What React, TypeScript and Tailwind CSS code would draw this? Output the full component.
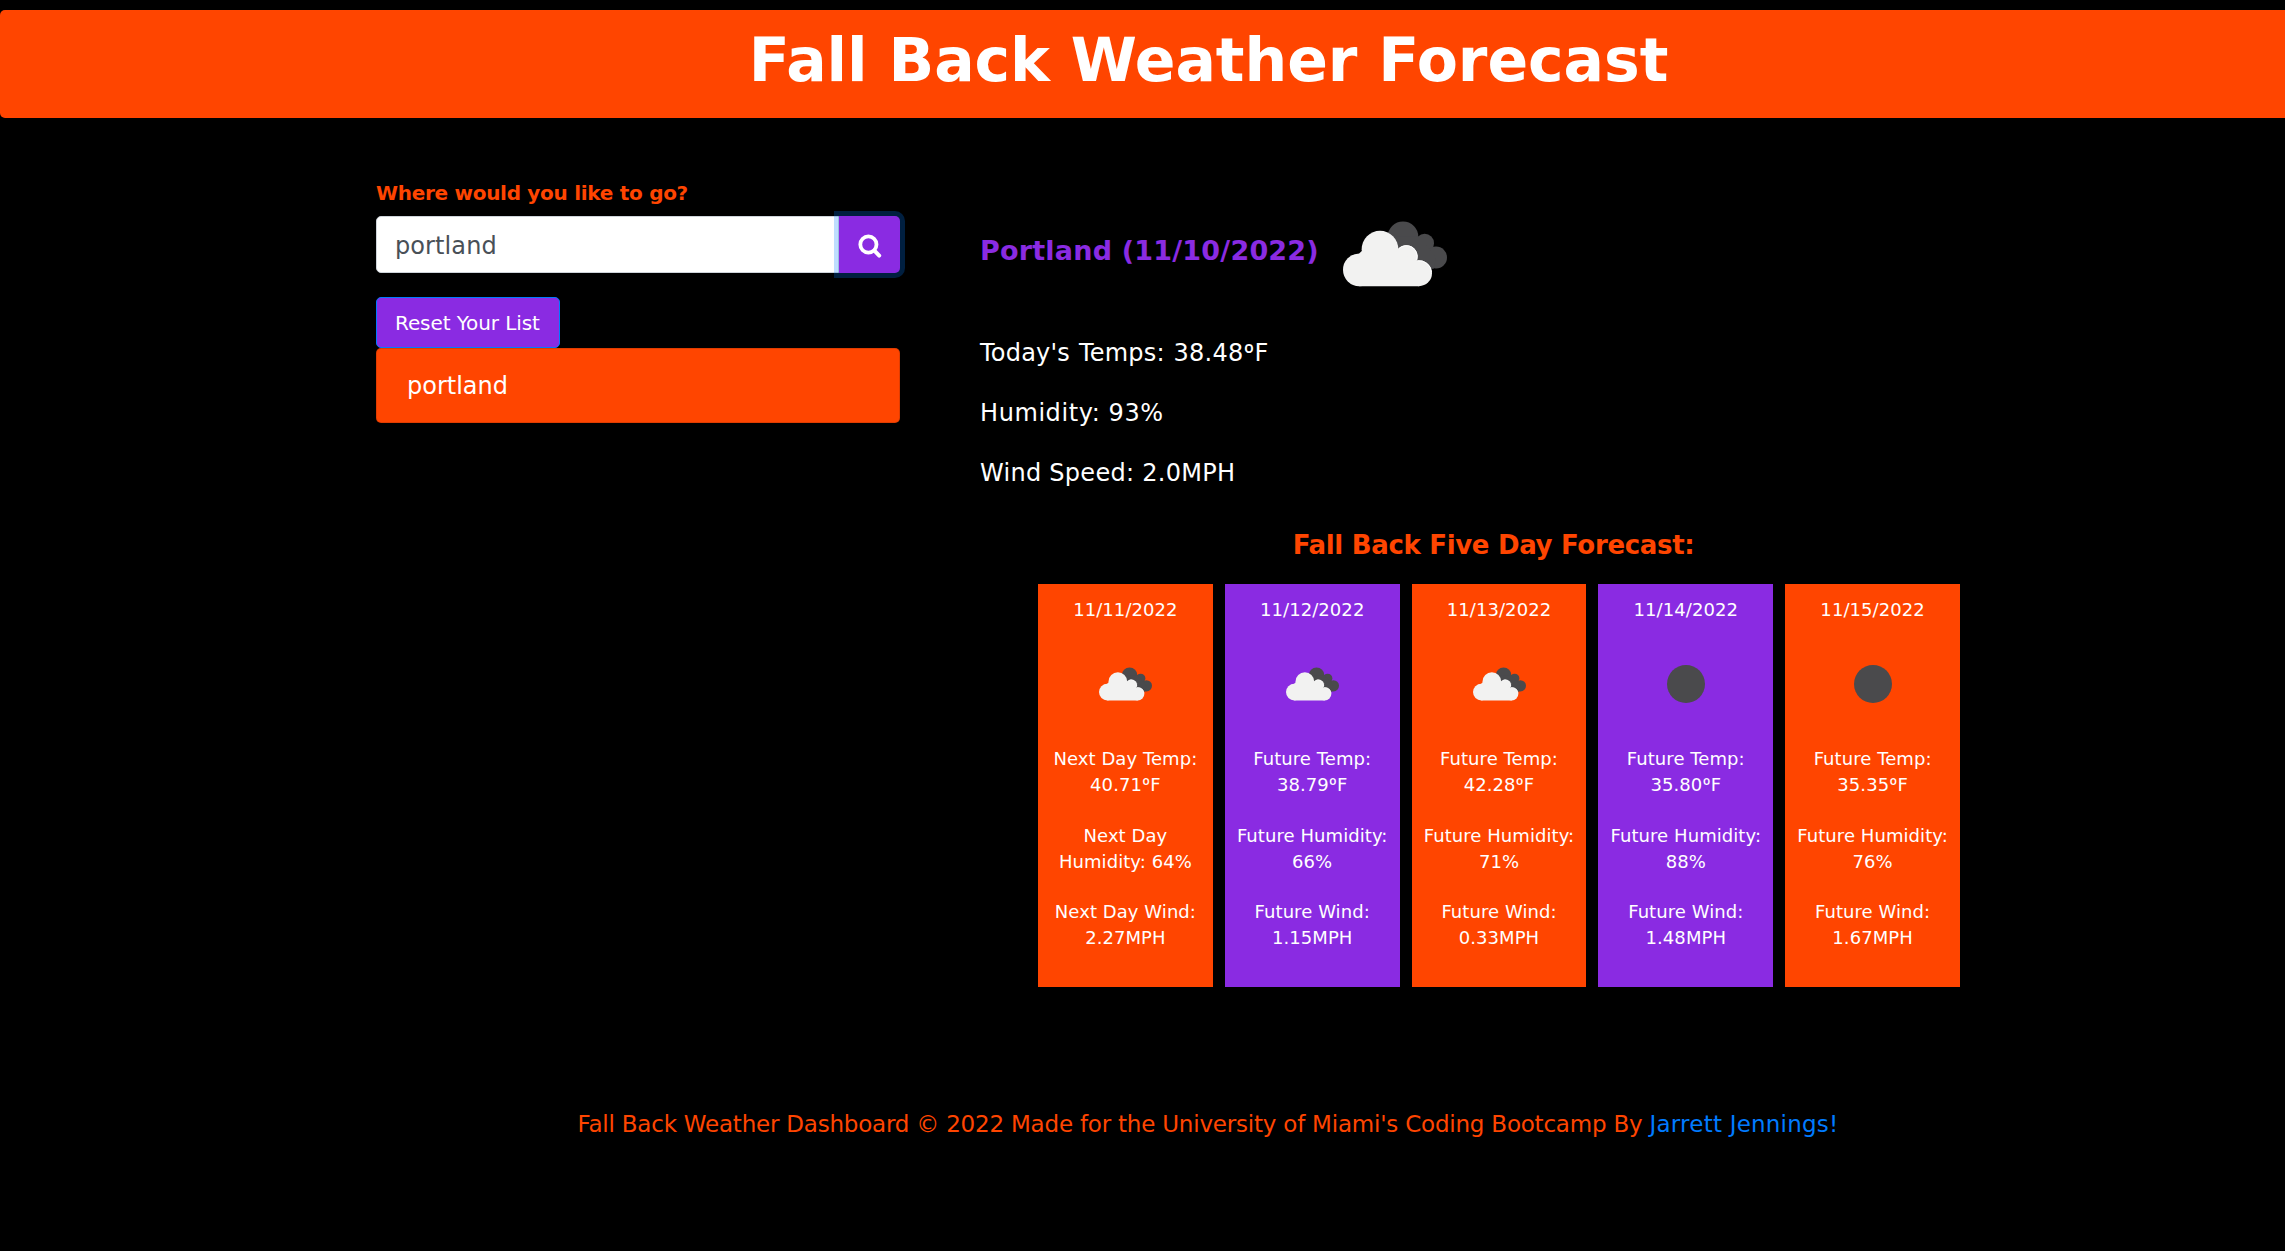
import { Fragment } from 'react';

type Sky = 'clouds' | 'clear';

type Day = {
  date: string;
  sky: Sky;
  lines: [string, string][];
};

const future = (date: string, sky: Sky, temp: string, humidity: string, wind: string): Day => ({
  date,
  sky,
  lines: [
    ['Future Temp:', temp],
    ['Future Humidity:', humidity],
    ['Future Wind:', wind],
  ],
});

const days: Day[] = [
  {
    date: '11/11/2022',
    sky: 'clouds',
    lines: [
      ['Next Day Temp:', '40.71ºF'],
      ['Next Day', 'Humidity: 64%'],
      ['Next Day Wind:', '2.27MPH'],
    ],
  },
  future('11/12/2022', 'clouds', '38.79ºF', '66%', '1.15MPH'),
  future('11/13/2022', 'clouds', '42.28ºF', '71%', '0.33MPH'),
  future('11/14/2022', 'clear', '35.80ºF', '88%', '1.48MPH'),
  future('11/15/2022', 'clear', '35.35ºF', '76%', '1.67MPH'),
];

// Sets the degree mark in a face whose ordinal has no underline.
function Reading({ text }: { text: string }) {
  return text.split('º').map((part, i) => (
    <Fragment key={i}>
      {i > 0 && <span className="font-['Roboto',sans-serif] leading-none">º</span>}
      {part}
    </Fragment>
  ));
}

function CloudIcon({ className }: { className: string }) {
  return (
    <svg viewBox="39 33 312 197" className={className} aria-hidden="true">
      <g fill="#4a4a4c">
        <circle cx="219" cy="80" r="46" />
        <circle cx="284" cy="99" r="28" />
        <circle cx="318" cy="142" r="33" />
        <path d="M190 80 L262 80 L284 99 L318 142 L312 175 L240 190 Z" />
      </g>
      <g fill="#f2f2f1">
        <circle cx="88" cy="179" r="49" />
        <circle cx="150" cy="117" r="55" />
        <circle cx="229" cy="139" r="34" />
        <circle cx="267" cy="189" r="39" />
        <path d="M88 228 L88 129 L110 110 L200 125 L258 152 L267 228 Z" />
      </g>
      <g fill="none" stroke="#ffffff" strokeWidth="3">
        <path d="M206 116 A32.5 32.5 0 0 1 260 149" />
        <path d="M262 151.8 A37.5 37.5 0 0 1 304.4 186" />
      </g>
    </svg>
  );
}

function SearchIcon() {
  return (
    <svg viewBox="0 0 24 25" className="h-[25px] w-6" fill="none" stroke="#ffffff" aria-hidden="true">
      <circle cx="10.4" cy="10.5" r="8.1" strokeWidth="3.8" />
      <path d="M16.4 16.6 L21.2 21.6" strokeWidth="4" strokeLinecap="round" />
    </svg>
  );
}

function Header() {
  return (
    <header className="mt-2.5 flex h-[108px] justify-center rounded-l-[5px] bg-[#ff4500] pt-3.5 pl-[132px]">
      <h1 className="text-[60px] leading-[72px] font-bold tracking-[-0.05px] text-white">Fall Back Weather Forecast</h1>
    </header>
  );
}

function SearchPanel() {
  return (
    <aside className="w-[524px]">
      <label htmlFor="city" className="block text-xl leading-[30px] font-bold tracking-[-0.29px] text-[#ff4500]">
        Where would you like to go?
      </label>
      <div className="mt-2 flex h-[57px]">
        <input
          id="city"
          defaultValue="portland"
          className="w-[463px] rounded-l-[5px] border border-[#ced4da] bg-white pt-0.5 pl-[18px] text-2xl tracking-[0.1px] text-[#495057] outline-none"
        />
        <button
          aria-label="Search"
          className="flex w-[61px] items-center justify-center rounded-r-[5px] bg-[#8a2be2] pt-1 shadow-[0_0_0_5px_rgba(0,123,255,0.25)]"
        >
          <SearchIcon />
        </button>
      </div>
      <button className="mt-6 flex h-[51px] w-[184px] items-center rounded-[5px] border border-[#007bff] bg-[#8a2be2] pl-[18px] text-xl tracking-[-0.1px] whitespace-nowrap text-white">
        Reset Your List
      </button>
      <ul>
        <li className="flex h-[75px] items-center rounded-[5px] border border-black/12 bg-[#ff4500] pl-[30px] text-2xl text-white">
          portland
        </li>
      </ul>
    </aside>
  );
}

function CurrentWeather() {
  return (
    <div className="text-white">
      <div className="flex h-[125px] items-center">
        <h2 className="w-[363px] text-[27px] leading-10 font-bold tracking-[0.2px] whitespace-nowrap text-[#8a2be2]">
          Portland (11/10/2022)
        </h2>
        <CloudIcon className="mt-1.5 h-[66px] w-[104px]" />
      </div>
      <div className="mt-[22px] flex flex-col gap-6 text-2xl leading-9">
        <p className="h-9 tracking-[0.22px] [word-spacing:1px]">
          <Reading text="Today's Temps: 38.48ºF" />
        </p>
        <p className="tracking-[0.58px]">Humidity: 93%</p>
        <p className="tracking-[0.28px]">Wind Speed: 2.0MPH</p>
      </div>
    </div>
  );
}

function DayCard({ day }: { day: Day }) {
  return (
    <article className="h-[403px] bg-[#ff4500] pt-[13px] text-center text-lg leading-[26px] tracking-[0.07px] whitespace-nowrap text-white even:bg-[#8a2be2]">
      <p>{day.date}</p>
      <div className="flex h-[123px] items-center justify-center pb-0.5 pl-px">
        {day.sky === 'clouds' ? (
          <CloudIcon className="h-[34px] w-[53px]" />
        ) : (
          <span className="size-[38px] rounded-full bg-[#4a4a4c]" />
        )}
      </div>
      <div className="flex flex-col gap-[24.6px]">
        {day.lines.map(([label, value]) => (
          <p key={label + value} className="h-[52px]">
            {label}
            <br />
            <Reading text={value} />
          </p>
        ))}
      </div>
    </article>
  );
}

export default function App() {
  return (
    <div className="flex h-[1251px] w-full flex-col overflow-hidden bg-black font-['Verdana','DejaVu_Sans',sans-serif]">
      <Header />
      <main className="flex gap-20 pt-[60px] pl-[376px]">
        <SearchPanel />
        <section className="pt-2.5">
          <CurrentWeather />
          <div className="mt-[38px] ml-[58px] w-[922px]">
            <h3 className="pr-[11px] text-center text-[26px] leading-8 font-bold tracking-[-0.32px] text-[#ff4500]">
              Fall Back Five Day Forecast:
            </h3>
            <div className="mt-[23px] grid grid-cols-5 gap-3">
              {days.map((day) => (
                <DayCard key={day.date} day={day} />
              ))}
            </div>
          </div>
        </section>
      </main>
      <footer className="mt-[119px] pl-[131px] text-center text-[23px] leading-9 tracking-[-0.21px] text-[#ff4500]">
        Fall Back Weather Dashboard © 2022 Made for the University of Miami's Coding Bootcamp By{' '}
        <a className="tracking-[0.22px] text-[#007bff]">Jarrett Jennings!</a>
      </footer>
    </div>
  );
}
